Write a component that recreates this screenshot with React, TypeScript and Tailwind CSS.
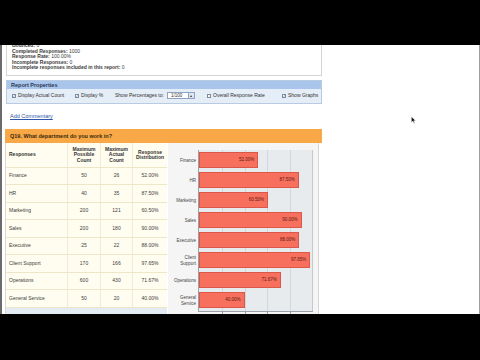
const rows = [
  { name: 'Finance', possible: 50, actual: 26, pct: 52.0, label: ['Finance'] },
  { name: 'HR', possible: 40, actual: 35, pct: 87.5, label: ['HR'] },
  { name: 'Marketing', possible: 200, actual: 121, pct: 60.5, label: ['Marketing'] },
  { name: 'Sales', possible: 200, actual: 180, pct: 90.0, label: ['Sales'] },
  { name: 'Executive', possible: 25, actual: 22, pct: 88.0, label: ['Executive'] },
  { name: 'Client Support', possible: 170, actual: 166, pct: 97.65, label: ['Client', 'Support'] },
  { name: 'Operations', possible: 600, actual: 430, pct: 71.67, label: ['Operations'] },
  { name: 'General Service', possible: 50, actual: 20, pct: 40.0, label: ['General', 'Service'] },
];

function Check({ on = true }: { on?: boolean }) {
  return (
    <span className="w-[4px] h-[4px] border-[0.5px] border-[#7a8aa0] bg-white inline-flex items-center justify-center shrink-0">
      {on && (
        <svg viewBox="0 0 8 8" className="w-[4px] h-[4px]">
          <path d="M1 4 L3 6 L7 1" stroke="#2b3f66" strokeWidth="1.6" fill="none" />
        </svg>
      )}
    </span>
  );
}

export default function App() {
  return (
    <div
      className="w-[480px] h-[360px] bg-black flex flex-col overflow-hidden"
      style={{ fontFamily: '"Liberation Sans", Arial, sans-serif' }}
    >
      <div className="h-[45px] shrink-0" />
      <div className="h-[269px] shrink-0 bg-white relative overflow-hidden border-l-[2px] border-l-[#6b6b6b] border-r border-r-[#a0a0a0]">
        <div className="w-[322px] pl-[1px]">
          {/* summary */}
          <div className="ml-[3px] w-[316px] -mt-[3px] border border-[#d4d4d4] pl-[5px] pb-[4px] text-[5px] leading-[5.6px] text-[#3a3a3a]">
            <div><b>Bounced:</b> 0</div>
            <div><b>Completed Responses:</b> 1000</div>
            <div><b>Response Rate:</b> 100.00%</div>
            <div><b>Incomplete Responses:</b> 0</div>
            <div><b>Incomplete responses included in this report:</b> 0</div>
          </div>

          {/* report properties */}
          <div className="ml-[3px] mt-[4px] w-[316px] border border-[#b9cbe3]">
            <div className="h-[8px] bg-[#a9c5eb] pl-[4px] flex items-center text-[5.5px] font-bold text-[#2c3a55]">
              Report Properties
            </div>
            <div className="h-[14px] bg-[#e5edf7] flex items-center pl-[5px] text-[5px] text-[#333]">
              <div className="w-[63px] flex items-center gap-[2px]"><Check /> Display Actual Count</div>
              <div className="w-[40px] flex items-center gap-[2px]"><Check /> Display %</div>
              <div className="w-[92px] flex items-center">
                <span>Show Percentages to:</span>
                <span className="ml-[3px] w-[28px] h-[7px] bg-white border-[0.5px] border-[#8fa3c0] flex items-center">
                  <span className="flex-1 pl-[3px] text-[4.5px]">1/100</span>
                  <span className="w-[6px] h-full bg-[#dfe7f3] border-l-[0.5px] border-[#8fa3c0] flex items-center justify-center text-[4px] leading-none">▴</span>
                </span>
              </div>
              <div className="w-[75px] flex items-center gap-[2px]"><Check on={false} /> Overall Response Rate</div>
              <div className="flex items-center gap-[2px]"><Check /> Show Graphs</div>
            </div>
          </div>

          {/* commentary */}
          <div className="h-[25px] flex items-center pl-[7px]">
            <span className="text-[5.5px] text-[#2f55a8] underline">Add Commentary</span>
          </div>

          {/* question */}
          <div className="ml-[2px] w-[317px]">
            <div className="h-[14px] bg-[#f8a846] flex items-center pl-[5px] text-[5.5px] font-bold text-[#3a2a10]">
              Q19. What department do you work in?
            </div>
            <div className="flex">
              {/* table */}
              <div className="w-[162px] bg-[#fffcf0] border-l border-[#d9d9d9] text-[5px] text-[#3c3c3c]">
                <div className="grid grid-cols-[61px_33px_32px_35px] h-[25px] border-b border-[#efe5c8] font-bold text-[#333] leading-[5.4px]">
                  <div className="flex items-center pl-[3px]">Responses</div>
                  <div className="flex items-center justify-center text-center border-l border-[#f1ead4]">Maximum<br />Possible<br />Count</div>
                  <div className="flex items-center justify-center text-center border-l border-[#f1ead4]">Maximum<br />Actual<br />Count</div>
                  <div className="flex items-center justify-center text-center border-l border-[#f1ead4]">Response<br />Distribution</div>
                </div>
                {rows.map((r) => (
                  <div key={r.name} className="grid grid-cols-[61px_33px_32px_35px] h-[17.5px] border-b border-[#efe5c8]">
                    <div className="flex items-center pl-[3px]">{r.name}</div>
                    <div className="flex items-center justify-center border-l border-[#f1ead4]">{r.possible}</div>
                    <div className="flex items-center justify-center border-l border-[#f1ead4]">{r.actual}</div>
                    <div className="flex items-center justify-center border-l border-[#f1ead4]">{r.pct.toFixed(2)}%</div>
                  </div>
                ))}
                <div className="grid grid-cols-[61px_33px_32px_35px] h-[17.5px] bg-[#e3ebf5] font-bold">
                  <div className="flex items-center pl-[3px]">Total</div>
                  <div className="flex items-center justify-center">1335</div>
                  <div className="flex items-center justify-center">1000</div>
                  <div className="flex items-center justify-center">74.91%</div>
                </div>
              </div>

              {/* chart */}
              <div className="w-[151px] ml-[1px] bg-[#f5f5f5] border-r border-[#d6d6d6] flex pt-[7px]">
                <div className="w-[30px] flex flex-col pr-[2px] text-[4.5px] leading-[5.5px] text-[#444]">
                  {rows.map((r) => (
                    <div key={r.name} className="h-[20px] flex flex-col items-end justify-center text-right pt-[2px]">
                      {r.label.map((l) => (
                        <span key={l}>{l}</span>
                      ))}
                    </div>
                  ))}
                </div>
                <div className="w-[115px] h-[162px] relative bg-[#e8ebee] border-l border-b border-[#9aa0a8]">
                  <div className="absolute top-0 bottom-0 left-[20%] w-px bg-[#d3d7dc]" />
                  <div className="absolute top-0 bottom-0 left-[40%] w-px bg-[#d3d7dc]" />
                  <div className="absolute top-0 bottom-0 left-[60%] w-px bg-[#d3d7dc]" />
                  <div className="absolute top-0 bottom-0 left-[80%] w-px bg-[#d3d7dc]" />
                  <div className="absolute top-0 bottom-0 right-0 w-px bg-[#c5c9ce]" />
                  <div className="relative flex flex-col">
                    {rows.map((r) => (
                      <div key={r.name} className="h-[20px] pt-[2px]">
                        <div
                          className="h-[16px] bg-[#f7705e] border border-[#d9584a] flex items-center justify-end pr-[3px] text-[4.5px] text-[#5a1a12]"
                          style={{ width: `${r.pct}%` }}
                        >
                          {r.pct.toFixed(2)}%
                        </div>
                      </div>
                    ))}
                  </div>
                  <div className="absolute -bottom-[3px] left-[20%] w-px h-[3px] bg-[#9aa0a8]" />
                  <div className="absolute -bottom-[3px] left-[40%] w-px h-[3px] bg-[#9aa0a8]" />
                  <div className="absolute -bottom-[3px] left-[60%] w-px h-[3px] bg-[#9aa0a8]" />
                  <div className="absolute -bottom-[3px] left-[80%] w-px h-[3px] bg-[#9aa0a8]" />
                </div>
              </div>
            </div>
          </div>
        </div>

        {/* mouse cursor */}
        <svg viewBox="0 0 12 18" className="absolute left-[409px] top-[71px] w-[5px] h-[8px]">
          <path d="M1 1 L1 15 L4.5 11.5 L7 17 L9 16 L6.5 10.5 L11 10.5 Z" fill="#111" stroke="#fff" strokeWidth="1" />
        </svg>
      </div>
      <div className="flex-1" />
    </div>
  );
}
